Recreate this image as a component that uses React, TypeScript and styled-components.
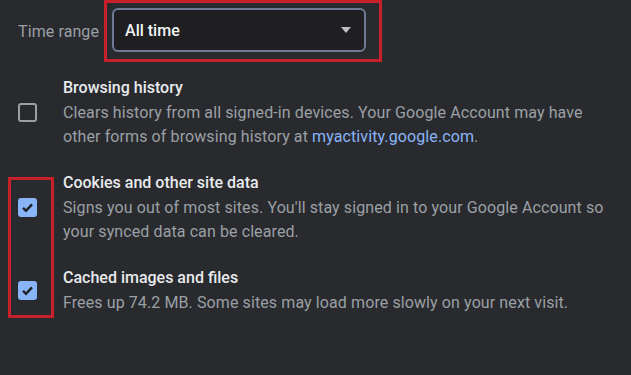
import React from 'react';
import styled, { createGlobalStyle } from 'styled-components';

const GlobalStyle = createGlobalStyle`
  html, body {
    margin: 0;
    padding: 0;
    background: #292a2d;
  }
  body {
    font-family: Roboto, "Noto Sans", sans-serif;
    -webkit-font-smoothing: antialiased;
  }
`;

const Page = styled.div`
  width: 631px;
  height: 375px;
  box-sizing: border-box;
  padding-left: 18px;
  overflow: hidden;
`;

const TopRow = styled.div`
  display: flex;
  align-items: center;
  gap: 5px;
`;

const Label = styled.span`
  color: #9aa0a6;
  font-size: 16px;
  letter-spacing: 0.1px;
`;

const Marked = styled.div`
  border: 3px solid #c8202b;
  padding: 5px 13px 7px 5px;
`;

const Select = styled.div`
  box-sizing: border-box;
  width: 254px;
  height: 44px;
  display: flex;
  align-items: center;
  justify-content: space-between;
  padding: 0 13px 0 11px;
  background: #1f1f22;
  border: 2px solid #6e7a96;
  border-radius: 6px;
  color: #f1f3f4;
  font-size: 16px;
  font-weight: 500;
`;

const Arrow = styled.span`
  width: 0;
  height: 0;
  border-left: 5px solid transparent;
  border-right: 5px solid transparent;
  border-top: 6px solid #bdc1c6;
`;

const List = styled.div`
  margin-top: 14px;
  display: flex;
  flex-direction: column;
  gap: 22px;
`;

const Group = styled.div`
  position: relative;
  display: flex;
  flex-direction: column;
  gap: 22px;
`;

const Highlight = styled.div`
  position: absolute;
  left: -10px;
  top: 6px;
  width: 46px;
  height: 141px;
  box-sizing: border-box;
  border: 3px solid #c8202b;
  pointer-events: none;
`;

const Row = styled.div`
  display: flex;
  align-items: center;
  gap: 26px;
`;

const Box = styled.span<{ $checked?: boolean }>`
  flex: none;
  box-sizing: border-box;
  width: 19px;
  height: 19px;
  border-radius: 3px;
  display: flex;
  align-items: center;
  justify-content: center;
  background: ${(p) => (p.$checked ? '#8ab4f8' : 'transparent')};
  border: ${(p) => (p.$checked ? 'none' : '2px solid #9aa0a6')};
`;

const Text = styled.div`
  display: flex;
  flex-direction: column;
  gap: 1px;
`;

const Title = styled.div`
  color: #e8eaed;
  font-size: 16px;
  font-weight: 500;
  line-height: 24px;
`;

const Desc = styled.div`
  color: #9aa0a6;
  font-size: 16px;
  line-height: 24px;
  letter-spacing: 0.1px;
`;

const Link = styled.a`
  color: #8ab4f8;
  text-decoration: none;
`;

function Check({ checked }: { checked?: boolean }) {
  return (
    <Box $checked={checked}>
      {checked && (
        <svg width="13" height="13" viewBox="0 0 13 13">
          <path d="M2 6.8 L5 9.8 L11 3.4" fill="none" stroke="#202124" strokeWidth="2.4" />
        </svg>
      )}
    </Box>
  );
}

export default function App() {
  return (
    <Page>
      <GlobalStyle />
      <TopRow>
        <Label>Time range</Label>
        <Marked>
          <Select>
            <span>All time</span>
            <Arrow />
          </Select>
        </Marked>
      </TopRow>
      <List>
        <Row>
          <Check />
          <Text>
            <Title>Browsing history</Title>
            <Desc>
              Clears history from all signed-in devices. Your Google Account may have
              <br />
              other forms of browsing history at <Link href="#">myactivity.google.com</Link>.
            </Desc>
          </Text>
        </Row>
        <Group>
          <Highlight />
          <Row>
            <Check checked />
            <Text>
              <Title>Cookies and other site data</Title>
              <Desc>
                Signs you out of most sites. You'll stay signed in to your Google Account so
                <br />
                your synced data can be cleared.
              </Desc>
            </Text>
          </Row>
          <Row>
            <Check checked />
            <Text>
              <Title>Cached images and files</Title>
              <Desc>Frees up 74.2 MB. Some sites may load more slowly on your next visit.</Desc>
            </Text>
          </Row>
        </Group>
      </List>
    </Page>
  );
}
